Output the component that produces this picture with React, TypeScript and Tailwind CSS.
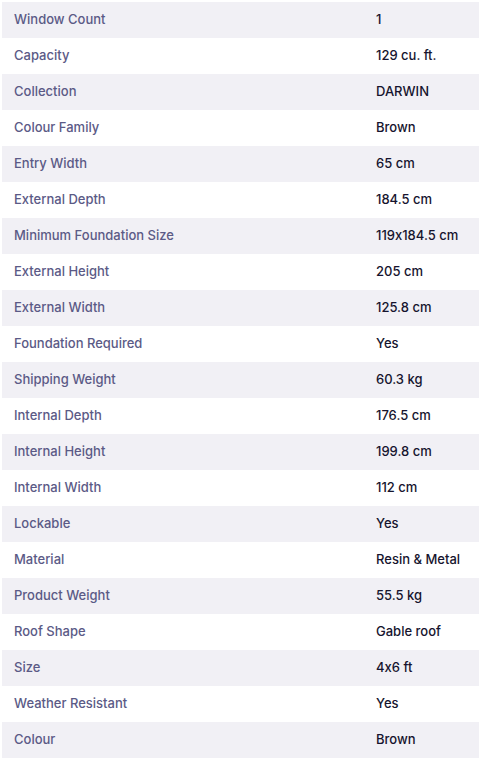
import React from "react";

const specs: [string, string][] = [
  ["Window Count", "1"],
  ["Capacity", "129 cu. ft."],
  ["Collection", "DARWIN"],
  ["Colour Family", "Brown"],
  ["Entry Width", "65 cm"],
  ["External Depth", "184.5 cm"],
  ["Minimum Foundation Size", "119x184.5 cm"],
  ["External Height", "205 cm"],
  ["External Width", "125.8 cm"],
  ["Foundation Required", "Yes"],
  ["Shipping Weight", "60.3 kg"],
  ["Internal Depth", "176.5 cm"],
  ["Internal Height", "199.8 cm"],
  ["Internal Width", "112 cm"],
  ["Lockable", "Yes"],
  ["Material", "Resin & Metal"],
  ["Product Weight", "55.5 kg"],
  ["Roof Shape", "Gable roof"],
  ["Size", "4x6 ft"],
  ["Weather Resistant", "Yes"],
  ["Colour", "Brown"],
];

export default function App() {
  return (
    <div className="bg-white pt-[2px] pl-[2px] font-['Inter',sans-serif] text-[13px] [font-feature-settings:'calt'_0]">
      <table className="w-full border-collapse">
        <tbody>
          {specs.map(([label, value], i) => (
            <tr key={label} className={i % 2 === 0 ? "bg-[#f1f0f5]" : "bg-white"}>
              <td className="h-9 w-[362px] px-3 text-[#5b5a86] font-medium">{label}</td>
              <td className="h-9 px-3 text-[#16142e] font-medium">{value}</td>
            </tr>
          ))}
        </tbody>
      </table>
    </div>
  );
}
